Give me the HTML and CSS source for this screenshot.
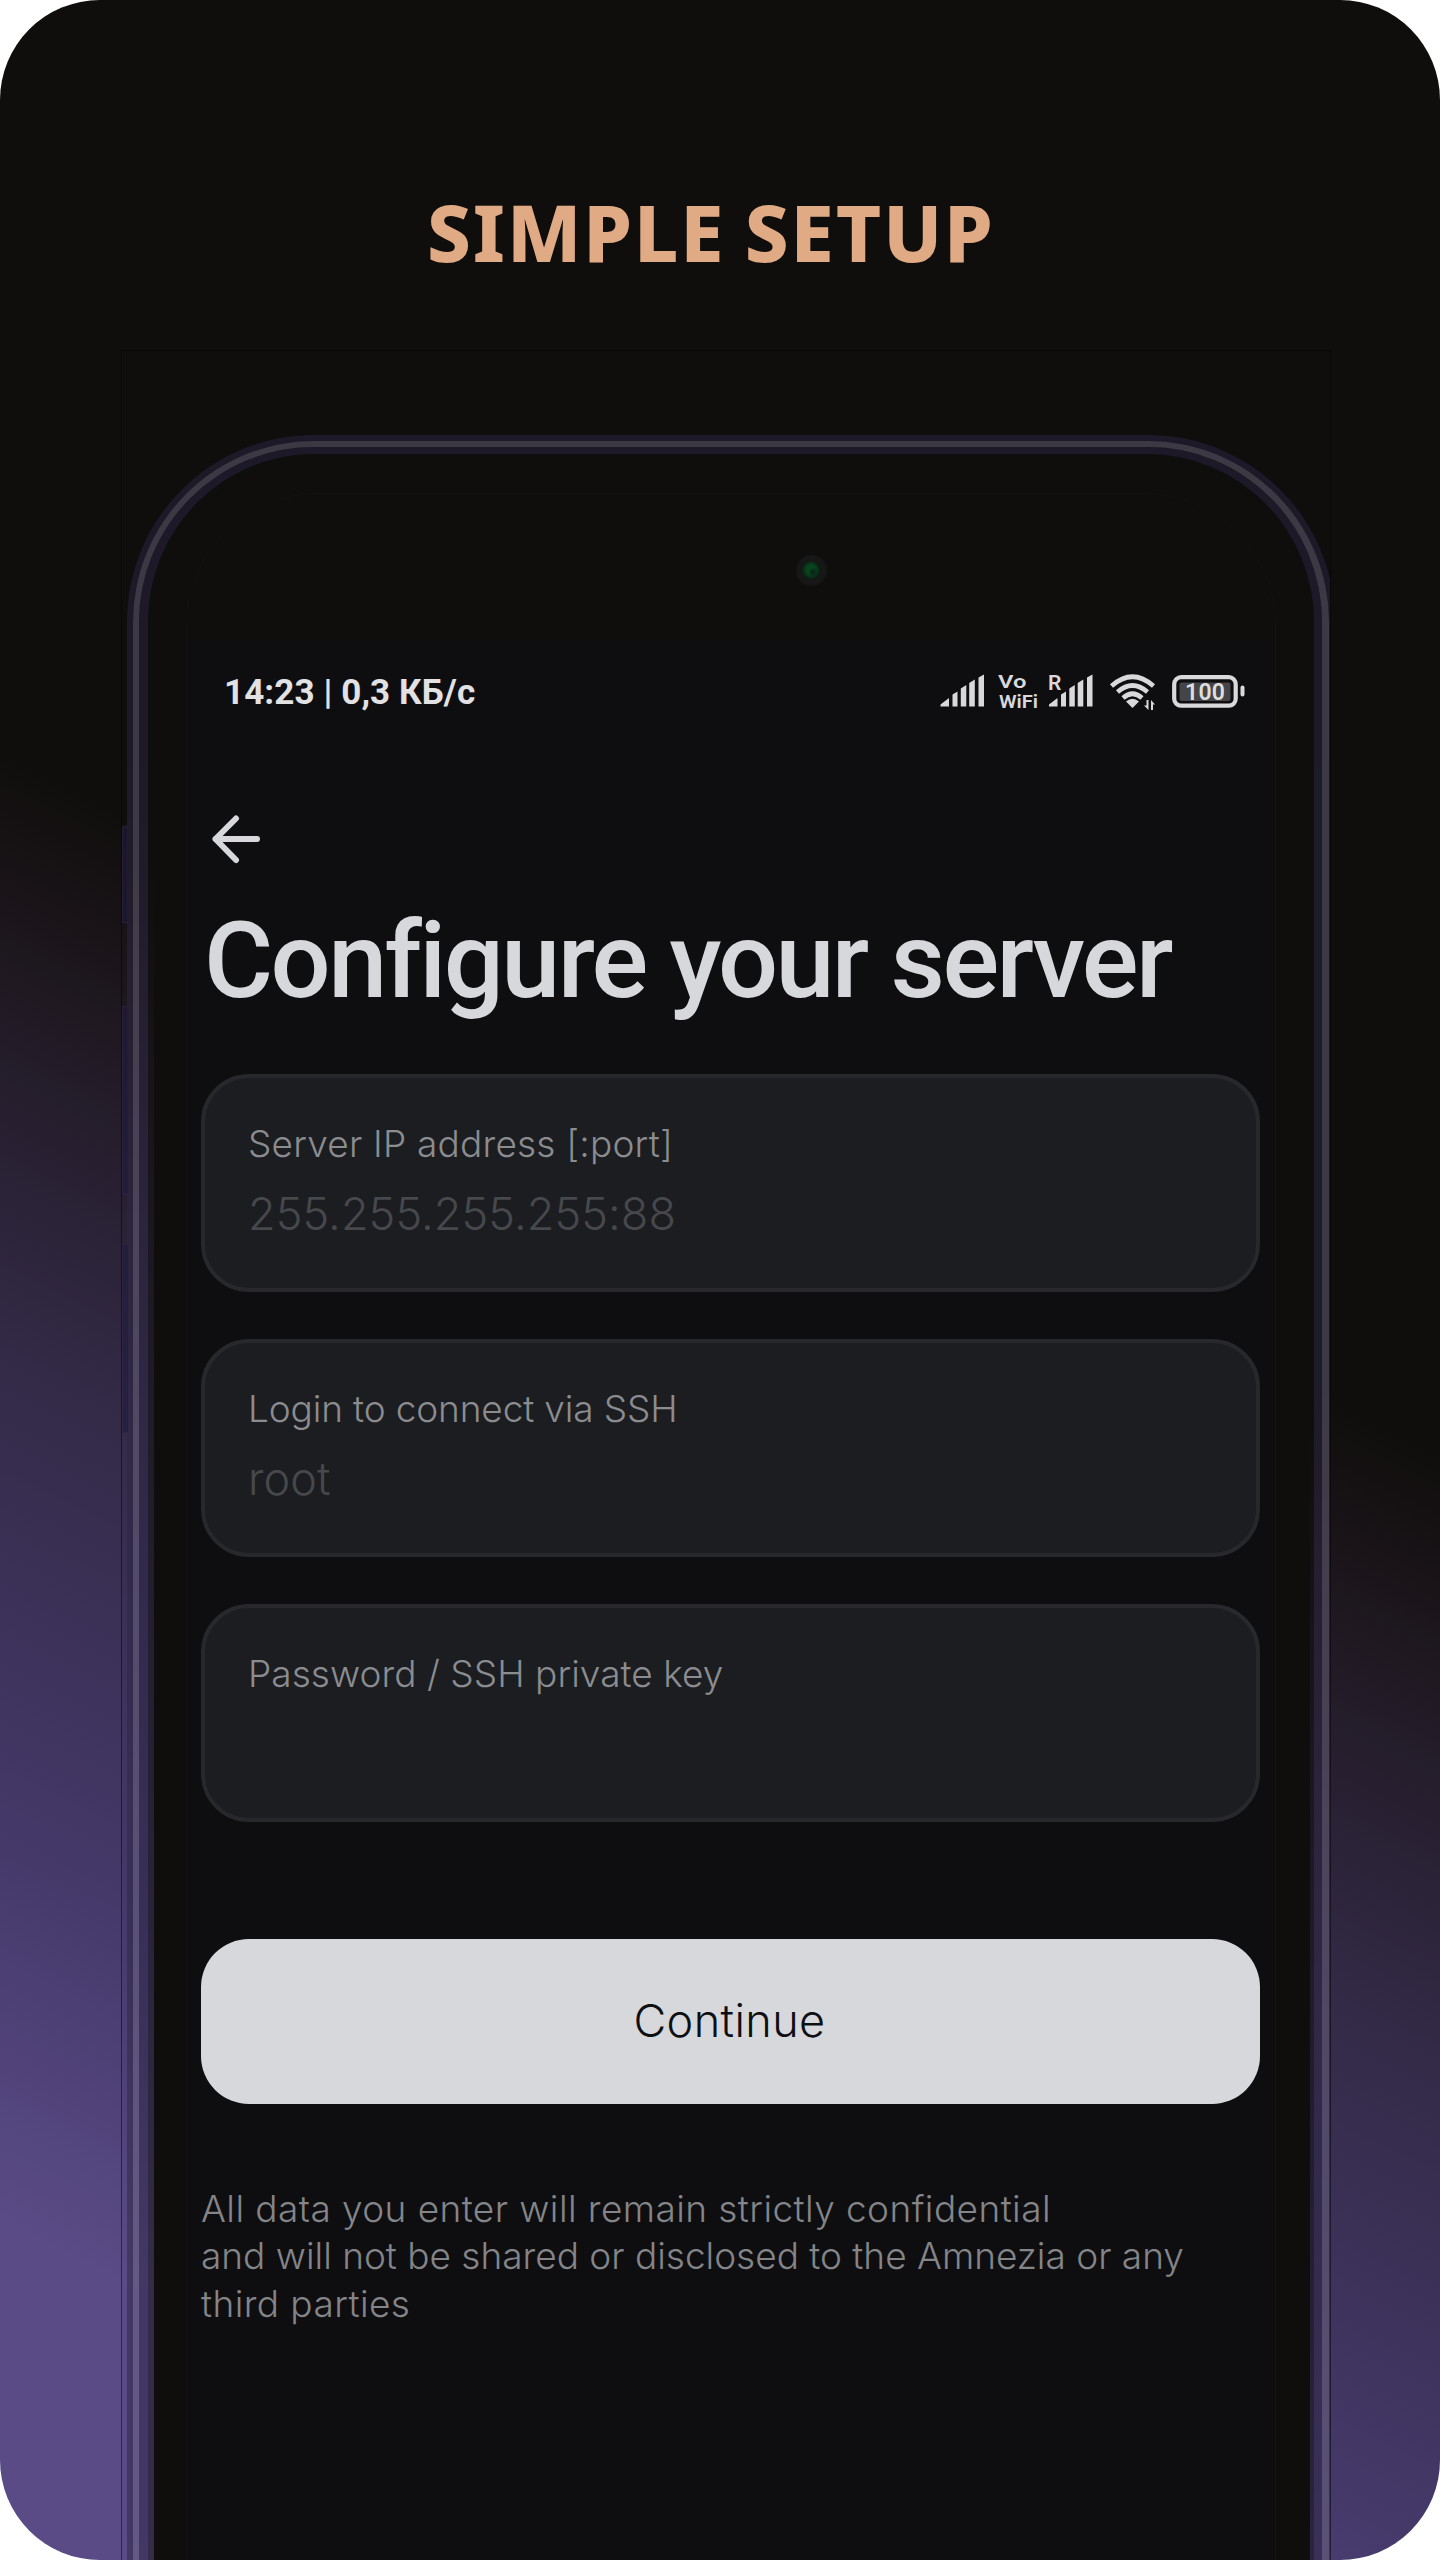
FILE: index.html
```html
<!DOCTYPE html>
<html lang="en">
<head>
<meta charset="utf-8">
<title>Simple setup</title>
<link rel="stylesheet" href="styles.css">
</head>
<body>
<main class="poster">
  <h1 class="poster-title">SIMPLE SETUP</h1>
  <div class="device">
    <i class="side-key key-a"></i>
    <i class="side-key key-b"></i>
    <i class="side-key key-c"></i>
    <div class="ring ring-outer"><div class="ring ring-light"><div class="ring ring-inner"><div class="ring ring-bezel">
      <div class="glass">
        <i class="camera"></i>
        <div class="screen">
          <div class="status-bar">
            <span class="status-time">14:23 | 0,3 КБ/с</span>
            <svg class="status-icons" viewBox="920 650 340 80" width="340" height="80">
              <g fill="#d9d9db">
                <path id="bars" d="M940.500 706.500V704.500L949 698V706.500ZM952.500 706.500V694.500L957.500 691.500V706.500ZM960.800 706.500V688.500L966.300 685V706.500ZM969.200 706.500V683L974.800 679.500V706.500ZM978.500 706.500V677.500L984 674.500V706.500Z"/>
                <use href="#bars" x="108.500"/>
                <text x="998" y="688" font-size="18.500" font-weight="600" textLength="28.500" lengthAdjust="spacingAndGlyphs">Vo</text>
                <text x="999" y="707.500" font-size="18.500" font-weight="600" textLength="39" lengthAdjust="spacingAndGlyphs">WiFi</text>
                <text x="1048" y="690" font-size="21" font-weight="600">R</text>
                <path d="M1132.500 708L1126 701.500Q1132.500 696 1139 701.500Z"/>
                <path d="M1148.500 700V710L1144 705.500H1146.500V700ZM1151 710V700L1155 704.500H1153V710Z"/>
                <rect x="1240.500" y="685.500" width="4" height="11" rx="2"/>
              </g>
              <g fill="none" stroke="#d9d9db" stroke-width="4.600">
                <path d="M1111.500 686Q1132.500 667.500 1153.500 686"/>
                <path d="M1117.500 692Q1132.500 679 1147.500 692"/>
                <path d="M1123 698Q1132.500 689.500 1142 698"/>
                <rect x="1174.200" y="677.200" width="61.500" height="28.500" rx="7" stroke-width="4.200"/>
              </g>
              <rect x="1179.500" y="682.500" width="51" height="18.500" rx="2" fill="#454547"/>
              <text x="1185" y="700" font-size="23" font-weight="600" fill="#dededf" textLength="40">100</text>
            </svg>
          </div>
          <svg class="back" viewBox="0 0 72 72" width="72" height="72" fill="none" stroke="#d7d8db" stroke-width="6" stroke-linecap="round" stroke-linejoin="round">
            <path d="M57 36H15.500M36 15.500L15.500 36L36 57"/>
          </svg>
          <h2 class="heading">Configure your server</h2>
          <div class="fields">
            <div class="field"><span class="label label-wide">Server IP address [:port]</span><span class="hint">255.255.255.255:88</span></div>
            <div class="field"><span class="label label-tight">Login to connect via SSH</span><span class="hint">root</span></div>
            <div class="field"><span class="label">Password / SSH private key</span></div>
          </div>
          <button class="continue" type="button">Continue</button>
          <p class="note">
            <span>All data you enter will remain strictly confidential</span>
            <span class="note-tight">and will not be shared or disclosed to the Amnezia or any</span>
            <span>third parties</span>
          </p>
        </div>
      </div>
    </div></div></div></div>
  </div>
</main>
</body>
</html>
```
FILE: styles.css
```css
* { box-sizing: border-box; }
body { margin: 0; background: #fff; }
h1, h2, p { margin: 0; }

.poster {
  width: 1440px;
  height: 2560px;
  overflow: hidden;
  display: flex;
  flex-direction: column;
  border-radius: 100px;
  background: linear-gradient(206deg, #0f0e0c 1295px, #161113 1380px, #211a24 1529px, #332a47 1844px, #45396a 2290px, #5a4b86 2630px);
}
.poster-title {
  height: 350px;
  padding: 182px 0 0 427px;
  font: 800 78px/100px "Noto Sans", sans-serif;
  letter-spacing: 1.9px;
  word-spacing: -3px;
  white-space: nowrap;
  color: #e0aa84;
}

.device {
  position: relative;
  width: 1210px;
  height: 2210px;
  margin-left: 121px;
  padding: 84px 0 0 5px;
  overflow: hidden;
  border: 1px solid rgba(0, 0, 0, .5);
  border-bottom: 0;
}
.side-key {
  position: absolute;
  left: 0;
  width: 6px;
  border: 1px solid rgba(70, 50, 80, .3);
  border-right: 0;
  background: rgba(32, 27, 62, .6);
}
.key-a { top: 475px; height: 97px; }
.key-b { top: 655px; height: 188px; }
.key-c { top: 893px; height: 189px; }

.ring { border-style: solid; border-bottom: 0; }
.ring-outer { width: 1208px; height: 2140px; border-width: 6px 6px 0; border-color: rgba(44, 39, 69, .51); border-radius: 187px 187px 0 0; }
.ring-light { height: 100%; border-width: 6px 7px 0 6px; border-color: rgba(113, 106, 132, .47); border-radius: 181px 181px 0 0; }
.ring-inner { height: 100%; border-width: 7px 8px 0 9px; border-color: rgba(44, 39, 69, .51); border-radius: 175px 175px 0 0; }
.ring-bezel { height: 100%; border-width: 6px 4px 0 6px; border-color: rgba(15, 14, 12, .5); border-radius: 167px 167px 0 0; }

.glass {
  position: relative;
  height: 100%;
  padding: 33px 34px 0 32px;
  border-radius: 161px 161px 0 0;
  background: #0f0e0d;
}
.camera {
  position: absolute;
  left: 642px;
  top: 95px;
  width: 32px;
  height: 32px;
  border-radius: 50%;
  background: radial-gradient(circle at 17px 17px, #0a2013 0, rgba(10, 32, 19, 0) 5px), radial-gradient(circle at 15px 15px, #0c4a24 0, #07431d 5px, #082a16 8px, #151716 9px, #171717 14px, #0f0f0e 17px);
}
.screen {
  width: 1090px;
  height: 2100px;
  padding: 157px 16px 0 15px;
  display: flex;
  flex-direction: column;
  border-radius: 132px 132px 0 0;
  background: linear-gradient(#0f0e0d 147px, #0e0e10 147px);
  box-shadow: inset 0 0 0 1px rgba(255, 255, 255, .02);
}

.status-bar {
  height: 80px;
  padding-left: 23px;
  display: flex;
  justify-content: space-between;
  align-items: center;
  font-family: Roboto, sans-serif;
}
.status-time { padding-top: 4px; font-size: 35px; font-weight: 700; letter-spacing: .1px; color: #e2e2e4; white-space: nowrap; }
.status-icons { flex: none; }
.back { margin: 73px 0 0 -1px; }

.heading {
  margin: 26px 0 0 3px;
  font: 500 106px/120px Roboto, sans-serif;
  letter-spacing: -2.6px;
  color: #d7d8db;
  white-space: nowrap;
}

.fields { margin-top: 53px; display: flex; flex-direction: column; gap: 47px; }
.field {
  height: 218px;
  padding: 44px 43px 0;
  display: flex;
  flex-direction: column;
  gap: 20px;
  border: 4px solid #27282b;
  border-radius: 48px;
  background: #1c1d21;
  font-family: Inter, sans-serif;
  font-weight: 300;
}
.label { font-size: 37px; line-height: 44px; letter-spacing: .05px; color: #8b8c90; }
.label-wide { letter-spacing: .2px; }
.label-tight { letter-spacing: -.14px; }
.hint { font-size: 45px; line-height: 56px; letter-spacing: .1px; color: #47484c; }

.continue {
  flex: none;
  height: 165px;
  margin-top: 117px;
  padding: 0 2px 2px 0;
  border: 0;
  border-radius: 48px;
  background: #d7d8db;
  font: 300 45px/1 Inter, sans-serif;
  letter-spacing: .4px;
  color: #0e0f12;
}
.note {
  margin-top: 81px;
  display: flex;
  flex-direction: column;
  font: 300 37px/47.300px Inter, sans-serif;
  letter-spacing: .42px;
  color: #848589;
  white-space: nowrap;
}
.note-tight { letter-spacing: -.01px; }
```
